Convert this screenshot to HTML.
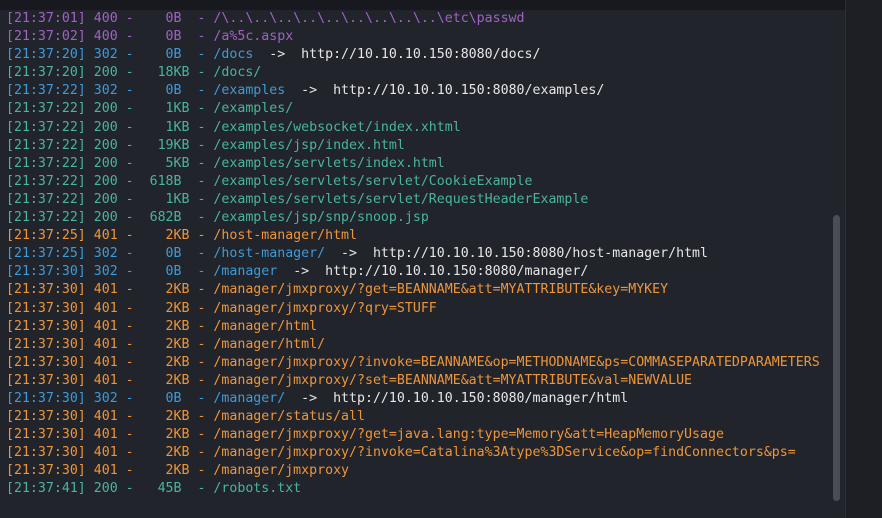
<!DOCTYPE html><html><head><style>
body{margin:0;width:882px;height:518px;background:#22242c;overflow:hidden;position:relative;font-family:"DejaVu Sans Mono","Liberation Mono",monospace;}
#top{position:absolute;left:0;top:0;width:845px;height:10px;background:#17191e}
#side{position:absolute;left:845px;top:0;width:37px;height:518px;background:#1d1f25;border-left:1px solid #2c2f37}
#sb{position:absolute;left:833px;top:215px;width:7px;height:286px;background:#4a4d56;border-radius:4px}
#t{position:absolute;left:6px;top:10px;margin:0;font-size:13.25px;white-space:pre}
#t div{height:18.1px;line-height:18.1px}
.p{color:#a062c4}.b{color:#3c9bd8}.g{color:#48b59c}.o{color:#ef9539}.w{color:#e6e6e6}
</style></head><body><div id="top"></div><div id="side"></div><div id="sb"></div>
<div id="t"><div class="p">[21:37:01] 400 -    0B  - /\..\..\..\..\..\..\..\..\..\etc\passwd</div><div class="p">[21:37:02] 400 -    0B  - /a%5c.aspx</div><div class="b">[21:37:20] 302 -    0B  - /docs<span class="w">  -&gt;  http://10.10.10.150:8080/docs/</span></div><div class="g">[21:37:20] 200 -   18KB - /docs/</div><div class="b">[21:37:22] 302 -    0B  - /examples<span class="w">  -&gt;  http://10.10.10.150:8080/examples/</span></div><div class="g">[21:37:22] 200 -    1KB - /examples/</div><div class="g">[21:37:22] 200 -    1KB - /examples/websocket/index.xhtml</div><div class="g">[21:37:22] 200 -   19KB - /examples/jsp/index.html</div><div class="g">[21:37:22] 200 -    5KB - /examples/servlets/index.html</div><div class="g">[21:37:22] 200 -  618B  - /examples/servlets/servlet/CookieExample</div><div class="g">[21:37:22] 200 -    1KB - /examples/servlets/servlet/RequestHeaderExample</div><div class="g">[21:37:22] 200 -  682B  - /examples/jsp/snp/snoop.jsp</div><div class="o">[21:37:25] 401 -    2KB - /host-manager/html</div><div class="b">[21:37:25] 302 -    0B  - /host-manager/<span class="w">  -&gt;  http://10.10.10.150:8080/host-manager/html</span></div><div class="b">[21:37:30] 302 -    0B  - /manager<span class="w">  -&gt;  http://10.10.10.150:8080/manager/</span></div><div class="o">[21:37:30] 401 -    2KB - /manager/jmxproxy/?get=BEANNAME&amp;att=MYATTRIBUTE&amp;key=MYKEY</div><div class="o">[21:37:30] 401 -    2KB - /manager/jmxproxy/?qry=STUFF</div><div class="o">[21:37:30] 401 -    2KB - /manager/html</div><div class="o">[21:37:30] 401 -    2KB - /manager/html/</div><div class="o">[21:37:30] 401 -    2KB - /manager/jmxproxy/?invoke=BEANNAME&amp;op=METHODNAME&amp;ps=COMMASEPARATEDPARAMETERS</div><div class="o">[21:37:30] 401 -    2KB - /manager/jmxproxy/?set=BEANNAME&amp;att=MYATTRIBUTE&amp;val=NEWVALUE</div><div class="b">[21:37:30] 302 -    0B  - /manager/<span class="w">  -&gt;  http://10.10.10.150:8080/manager/html</span></div><div class="o">[21:37:30] 401 -    2KB - /manager/status/all</div><div class="o">[21:37:30] 401 -    2KB - /manager/jmxproxy/?get=java.lang:type=Memory&amp;att=HeapMemoryUsage</div><div class="o">[21:37:30] 401 -    2KB - /manager/jmxproxy/?invoke=Catalina%3Atype%3DService&amp;op=findConnectors&amp;ps=</div><div class="o">[21:37:30] 401 -    2KB - /manager/jmxproxy</div><div class="g">[21:37:41] 200 -   45B  - /robots.txt</div></div>
</body></html>
